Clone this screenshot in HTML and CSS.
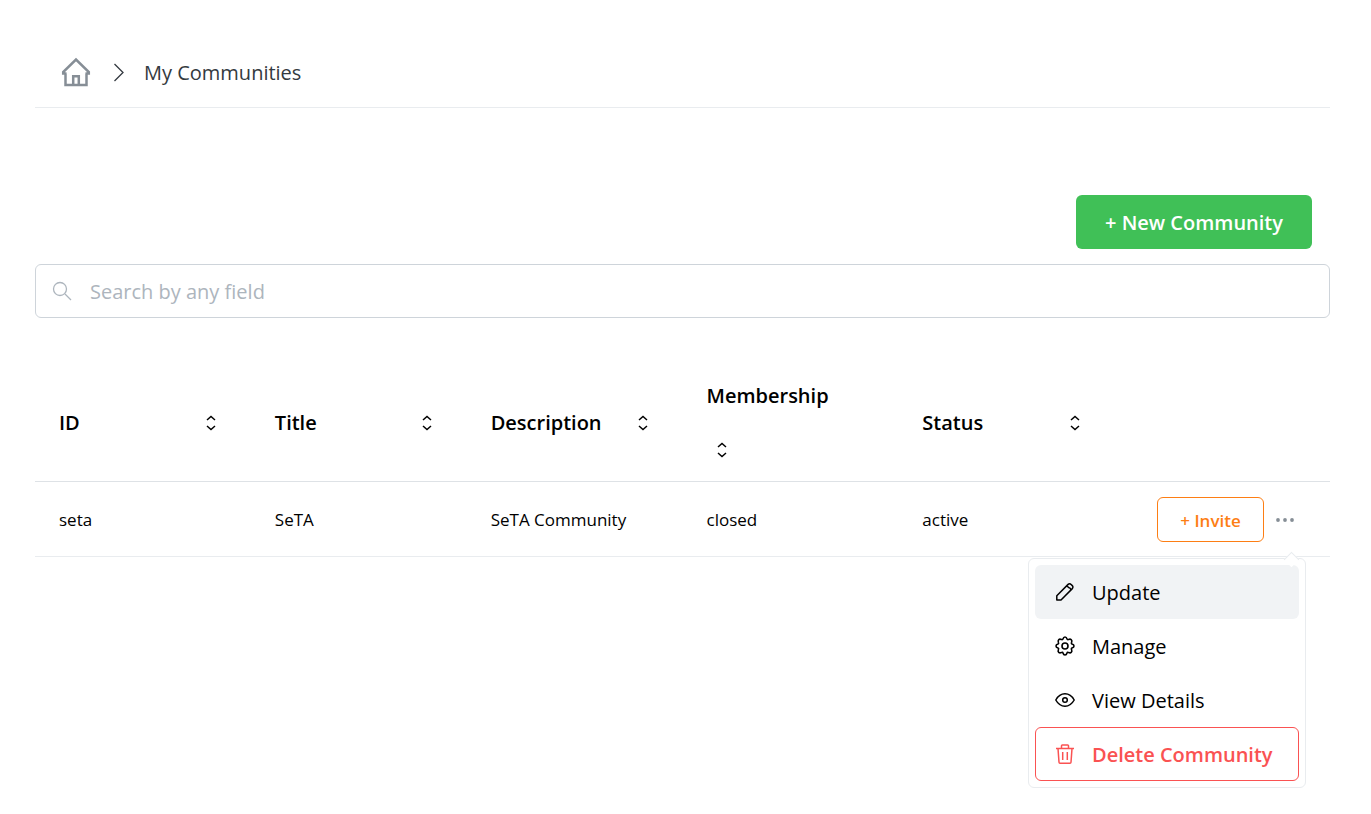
FILE: index.html
```html
<!DOCTYPE html>
<html lang="en">
<head>
<meta charset="utf-8">
<meta name="viewport" content="width=device-width, initial-scale=1">
<title>My Communities</title>
<link rel="stylesheet" href="styles.css">
</head>
<body>
<svg class="sprite" aria-hidden="true">
  <symbol id="sort" viewBox="0 0 16 20">
    <path d="M4 7 8 3.500 12 7M4 13l4 3.500 4-3.500" fill="none" stroke="currentColor" stroke-width="1.500"/>
  </symbol>
</svg>
<main class="page">
  <nav class="breadcrumb" aria-label="Breadcrumb">
    <a class="home" href="#" aria-label="Home">
      <svg width="30" height="32" viewBox="0 0 30 32" fill="none" stroke="currentColor" stroke-width="2.500"><path d="M4.500 16.500v11.500h21V16.500M12.200 28v-8.800h5.600V28M5.500 16.500H2.200V15L15 2.600 27.800 15v1.500h-3.300"/></svg>
    </a>
    <svg class="chevron" width="14" height="20" viewBox="0 0 14 20" fill="none" stroke="currentColor" stroke-width="1.300"><path d="M2.500 1 11 9.500l-8.500 8.500"/></svg>
    <span>My Communities</span>
  </nav>

  <div class="toolbar">
    <button class="btn btn-new" type="button">+ New Community</button>
  </div>

  <label class="search">
    <svg width="20" height="20" viewBox="0 0 20 20" fill="none" stroke="currentColor" stroke-width="1.300" aria-hidden="true"><circle cx="8" cy="8" r="6.500"/><path d="m13 13 6 6"/></svg>
    <input type="search" placeholder="Search by any field" aria-label="Search by any field">
  </label>

  <table class="communities">
    <thead>
      <tr>
        <th scope="col"><div class="head"><span>ID</span><button type="button" class="sort" aria-label="Sort by ID"><svg width="16" height="20"><use href="#sort"/></svg></button></div></th>
        <th scope="col"><div class="head"><span>Title</span><button type="button" class="sort" aria-label="Sort by title"><svg width="16" height="20"><use href="#sort"/></svg></button></div></th>
        <th scope="col"><div class="head"><span>Description</span><button type="button" class="sort" aria-label="Sort by description"><svg width="16" height="20"><use href="#sort"/></svg></button></div></th>
        <th scope="col"><div class="head"><span>Membership</span><button type="button" class="sort" aria-label="Sort by membership"><svg width="16" height="20"><use href="#sort"/></svg></button></div></th>
        <th scope="col"><div class="head"><span>Status</span><button type="button" class="sort" aria-label="Sort by status"><svg width="16" height="20"><use href="#sort"/></svg></button></div></th>
        <td></td>
      </tr>
    </thead>
    <tbody>
      <tr>
        <td>seta</td>
        <td>SeTA</td>
        <td>SeTA Community</td>
        <td>closed</td>
        <td>active</td>
        <td>
          <div class="actions">
            <button class="btn btn-invite" type="button">+ Invite</button>
            <button class="more" type="button" aria-label="More actions" aria-expanded="true">
              <svg width="20" height="6" viewBox="0 0 20 6" fill="currentColor"><circle cx="3" cy="3" r="1.900"/><circle cx="10" cy="3" r="1.900"/><circle cx="17" cy="3" r="1.900"/></svg>
            </button>
            <div class="menu" role="menu">
              <button class="item active" type="button" role="menuitem">
                <svg width="20" height="20" viewBox="0 0 20 20" fill="none" stroke="currentColor" stroke-width="1.500" stroke-linejoin="round"><path d="M1.800 18v-4.300L13.100 2.400a2.100 2.100 0 0 1 3 0l1.200 1.200a2.100 2.100 0 0 1 0 3L6 18zM11.800 3.700l1.800 1.800q2 .2 2.300 2.400"/></svg>
                <span>Update</span>
              </button>
              <button class="item" type="button" role="menuitem">
                <svg width="20" height="20" viewBox="0 0 20 20" fill="none" stroke="currentColor" stroke-width="1.600" stroke-linejoin="round"><path d="M8 3Q8.500 1 10 1T12 3Q12.500 4 13.700 3.400Q15.300 2.800 16.300 3.800T16.600 6.300Q16 7.500 17 8Q19 8.500 19 10T17 12Q16 12.500 16.600 13.700Q17.200 15.300 16.300 16.300T13.700 16.600Q12.500 16 12 17Q11.500 19 10 19T8 17Q7.500 16 6.300 16.600Q4.700 17.200 3.700 16.300T3.400 13.700Q4 12.500 3 12Q1 11.500 1 10T3 8Q4 7.500 3.400 6.300Q2.800 4.700 3.700 3.700T6.300 3.400Q7.500 4 8 3Z"/><circle cx="10" cy="10" r="3"/></svg>
                <span>Manage</span>
              </button>
              <button class="item" type="button" role="menuitem">
                <svg width="20" height="20" viewBox="0 0 20 20" fill="none" stroke="currentColor" stroke-width="1.500"><path d="M.8 10C3 6 6.300 3.800 10 3.800S17 6 19.200 10C17 14 13.700 16.200 10 16.200S3 14 .8 10Z"/><circle cx="10" cy="10" r="2.300"/></svg>
                <span>View Details</span>
              </button>
              <button class="item danger" type="button" role="menuitem">
                <svg width="20" height="20" viewBox="0 0 20 20" fill="none" stroke="currentColor" stroke-width="1.500" stroke-linejoin="round"><path d="M1 4.500h18M6.500 4.500V1.800q0-.8.800-.8h5.400q.8 0 .8.800v2.700M3 4.500l1 13.700q.1 1 1 1h10q.9 0 1-1L17 4.500M7.700 8v8M12.300 8v8"/></svg>
                <span>Delete Community</span>
              </button>
            </div>
          </div>
        </td>
      </tr>
    </tbody>
  </table>
</main>
</body>
</html>
```
FILE: styles.css
```css
* {
  box-sizing: border-box;
}

body {
  margin: 0;
  background: #fff;
  color: #000;
  font-family: "Segoe UI", "Open Sans", "Noto Sans", sans-serif;
  font-size: 20px;
  line-height: 28px;
}

button,
input {
  font: inherit;
  color: inherit;
}

button {
  cursor: pointer;
}

svg {
  display: block;
  flex: none;
}

.sprite {
  position: absolute;
  width: 0;
  height: 0;
}

.page {
  min-height: 100vh;
  padding: 38px 41px 24px 35px;
}

.breadcrumb {
  display: flex;
  align-items: center;
  height: 70px;
  padding: 0 26px;
  border-bottom: 1px solid #e9ecef;
  color: #343a40;
}

.home {
  color: #868e96;
}

.chevron {
  margin: 0 18px 0 21px;
}

.toolbar {
  display: flex;
  justify-content: flex-end;
  padding: 87px 18px 15px;
}

.btn {
  padding: 2px 6px 0;
  border: 1px solid transparent;
  border-radius: 6px;
  font-weight: 600;
  white-space: nowrap;
}

.btn-new {
  min-width: 236px;
  height: 54px;
  background: #40c057;
  color: #fff;
}

.search {
  display: flex;
  align-items: center;
  gap: 18px;
  height: 54px;
  padding: 0 16px;
  border: 1px solid #ced4da;
  border-radius: 6px;
  color: #adb5bd;
}

.search input {
  flex: 1;
  min-width: 0;
  padding: 2px 0 0;
  border: 0;
  outline: 0;
  background: none;
  color: #000;
}

.search input::placeholder {
  color: #adb5bd;
  opacity: 1;
}

.communities {
  width: 100%;
  margin-top: 40px;
  border-collapse: collapse;
  table-layout: fixed;
}

.communities th,
.communities td {
  padding: 10px 24px 4px;
  border-bottom: 1px solid #dee2e6;
  font-weight: 600;
  text-align: left;
}

.communities tbody td {
  padding: 15px 24px 14px;
  border-color: #e9ecef;
  font-size: 17px;
  font-weight: 400;
}

.head {
  display: flex;
  flex-wrap: wrap;
  align-items: center;
  justify-content: space-between;
  column-gap: 20px;
  line-height: 55px;
}

.sort {
  display: flex;
  align-items: center;
  justify-content: center;
  width: 31px;
  height: 54px;
  padding: 0;
  border: 0;
  background: none;
}

.actions {
  position: relative;
  display: flex;
  align-items: center;
  justify-content: flex-end;
}

.btn-invite {
  min-width: 107px;
  height: 45px;
  border-color: #fd7e14;
  background: #fff;
  color: #fd7e14;
}

.more {
  display: flex;
  align-items: center;
  justify-content: center;
  width: 42px;
  height: 42px;
  padding: 0;
  border: 0;
  background: none;
  color: #868e96;
}

.menu {
  position: absolute;
  z-index: 1;
  top: 61px;
  right: 0;
  min-width: 278px;
  padding: 6px;
  border: 1px solid #e9ecef;
  border-radius: 6px;
  background: #fff;
  font-size: 20px;
}

.menu::before {
  content: "";
  position: absolute;
  top: -5px;
  right: 8px;
  width: 10px;
  height: 10px;
  border: 1px solid #e9ecef;
  border-width: 1px 0 0 1px;
  background: #fff;
  transform: rotate(45deg);
}

.item {
  display: flex;
  align-items: center;
  gap: 17px;
  width: 100%;
  height: 54px;
  padding: 0 19px;
  border: 1px solid transparent;
  border-radius: 6px;
  background: none;
  white-space: nowrap;
}

.item span {
  padding-top: 2px;
}

.item.active {
  background: #f1f3f5;
}

.item.danger {
  border-color: #fa5252;
  color: #fa5252;
  font-weight: 600;
}
```
